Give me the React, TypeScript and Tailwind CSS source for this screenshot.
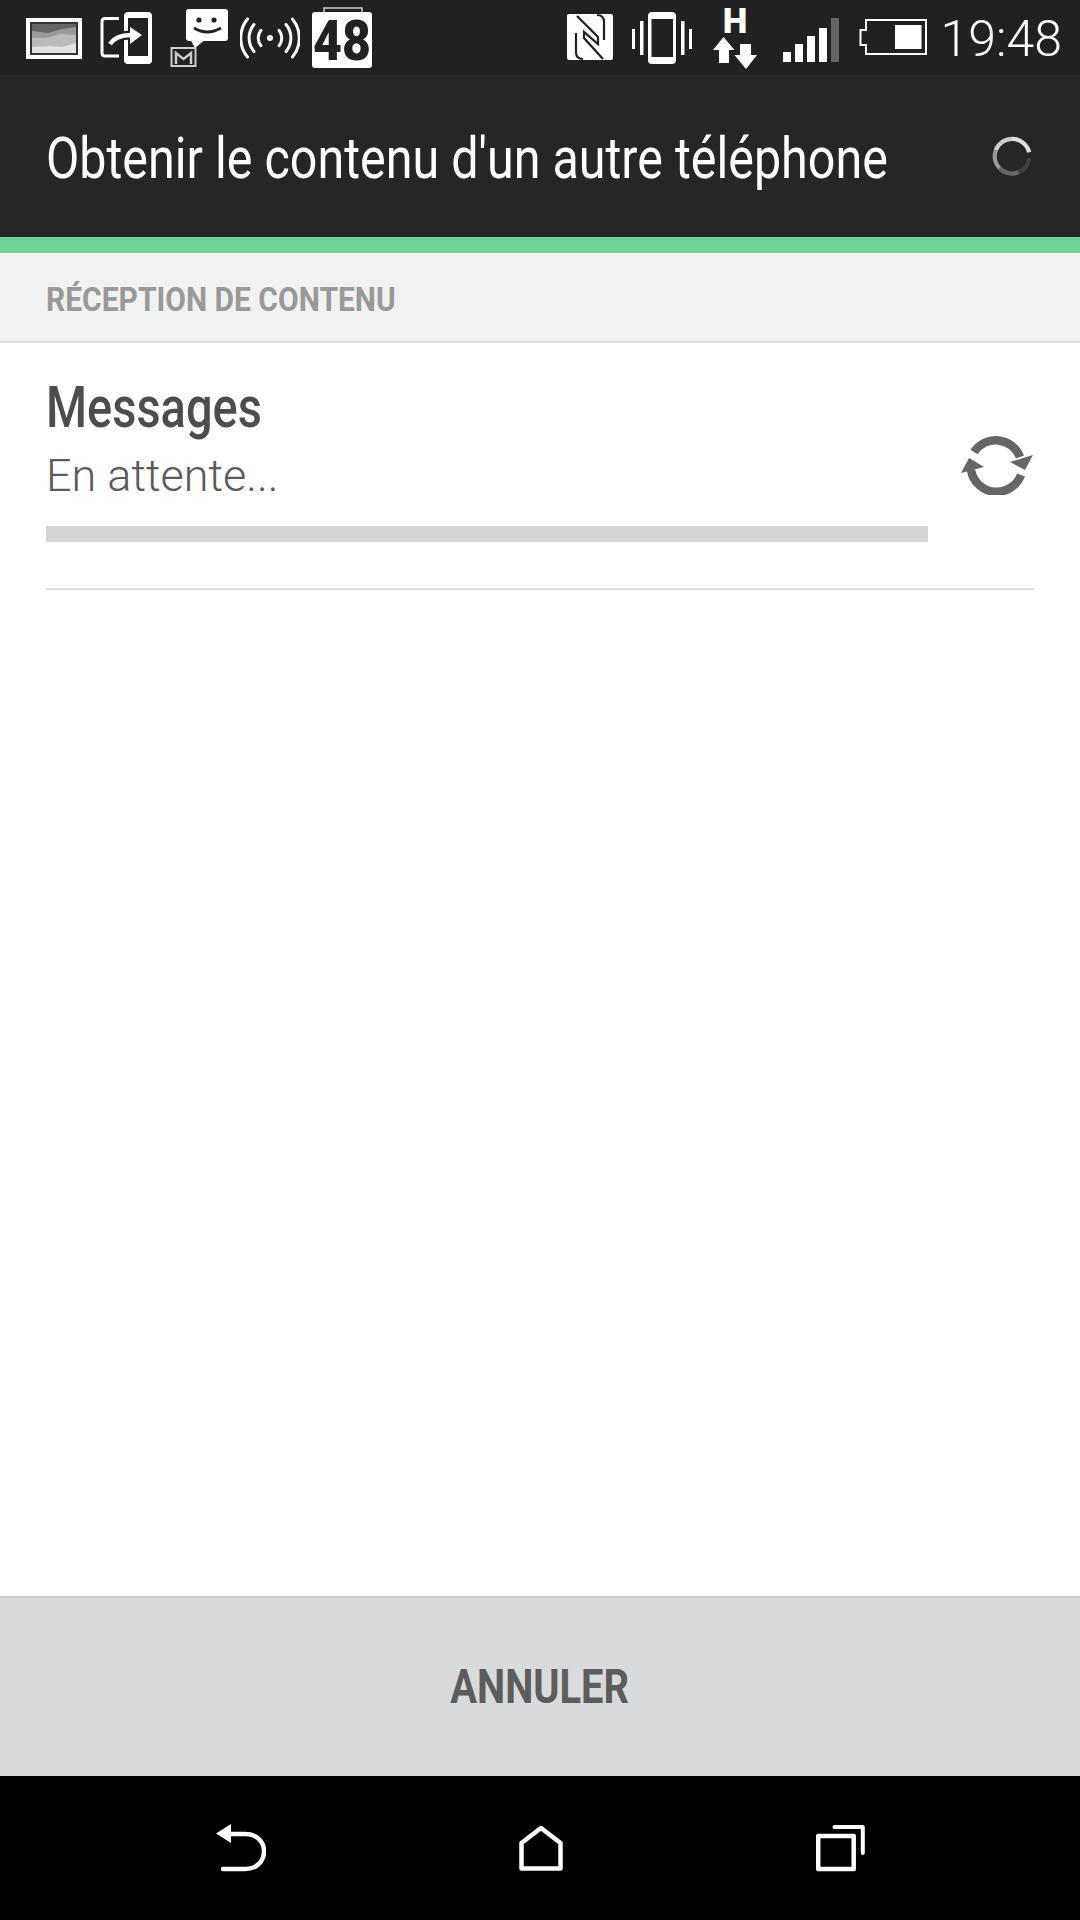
export default function App() {
  const dark = "#212121";
  return (
    <div className="w-[1080px] h-[1920px] flex flex-col bg-white overflow-hidden font-['Roboto',sans-serif]">
      {/* Status bar */}
      <div className="h-[75px] shrink-0 bg-[#212121] flex justify-between">
        <div className="flex pl-[26px]">
          <svg width="56" height="75" viewBox="26 0 56 75">
            <rect x="26" y="18" width="56" height="41" fill="#fff" />
            <rect x="30" y="22" width="48" height="33" fill="#333" />
            <rect x="32" y="24" width="44" height="29" fill="#666" />
            <polygon points="32,31 48,33 62,29 76,27 76,53 32,53" fill="#999" />
            <polygon points="32,38 46,38 60,34 76,35 76,53 32,53" fill="#bbb" />
            <polygon points="32,47 50,46 62,47 76,43 76,53 32,53" fill="#e2e2e2" />
          </svg>
          <svg className="ml-[18px]" width="52" height="75" viewBox="100 0 52 75">
            <path d="M119 18.5 H105 Q102 18.5 102 21.5 V53 Q102 56 105 56 H119" fill="none" stroke="#fff" strokeWidth="3" />
            <rect x="124" y="12" width="28" height="52" rx="4" fill="#fff" />
            <rect x="128" y="18" width="20" height="38" fill={dark} />
            <path d="M110 44 Q116 35 131 35" fill="none" stroke={dark} strokeWidth="9" />
            <path d="M110 44 Q116 35 131 35" fill="none" stroke="#fff" strokeWidth="4.5" />
            <polygon points="130,27 142,35 130,44" fill="#fff" />
          </svg>
          <svg className="ml-[18px]" width="59" height="75" viewBox="170 0 59 75">
            <rect x="186" y="9" width="42" height="32" rx="3" fill="#fff" />
            <polygon points="190,39 206,39 195,48" fill="#fff" />
            <circle cx="199" cy="20" r="2.6" fill={dark} />
            <circle cx="214" cy="20" r="2.6" fill={dark} />
            <path d="M194 28 Q207 36 221 28" fill="none" stroke={dark} strokeWidth="2.8" />
            <rect x="171.5" y="48" width="24" height="18" fill={dark} stroke="#ccc" strokeWidth="2" />
            <path d="M176 64 V53 L183.5 59 L191 53 V64" fill="none" stroke="#ccc" strokeWidth="2.5" />
          </svg>
          <svg className="ml-[11px]" width="60" height="75" viewBox="240 0 60 75">
            <circle cx="270" cy="38" r="3" fill="#fff" />
            <g fill="none" stroke="#fff" strokeWidth="3" strokeLinecap="round">
              <path d="M247.5 19 A30 30 0 0 0 247.5 57" />
              <path d="M254 24.5 A21 21 0 0 0 254 51.5" />
              <path d="M261 30.3 A12 12 0 0 0 261 45.7" />
              <path d="M292.5 19 A30 30 0 0 1 292.5 57" />
              <path d="M286 24.5 A21 21 0 0 1 286 51.5" />
              <path d="M279 30.3 A12 12 0 0 1 279 45.7" />
            </g>
          </svg>
          <svg className="ml-[12px]" width="60" height="75" viewBox="312 0 60 75">
            <rect x="324" y="8" width="38" height="6" fill="none" stroke="#ccc" strokeWidth="1.5" />
            <rect x="312" y="12" width="60" height="56" rx="3" fill="#fff" />
            <text x="342" y="53.6" transform="scale(1 1.12)" textAnchor="middle" fontFamily="Roboto" fontWeight="900" fontSize="50" fill={dark}>48</text>
          </svg>
        </div>
        <div className="flex pr-[18px]">
          <svg width="46" height="75" viewBox="566 0 46 75">
            <rect x="566" y="14" width="46" height="46" rx="2" fill="#fff" />
            <g fill="none" stroke={dark} strokeWidth="2.2">
              <path d="M575 33 V52 Q575 59 582 59" />
              <path d="M603 40 V22 Q603 15 596 15" />
              <path d="M576 16 L597 37 V44 L583 32 V38 L602 59" />
            </g>
          </svg>
          <svg className="ml-[18px]" width="61" height="75" viewBox="630 0 61 75">
            <rect x="647" y="12" width="28" height="52" rx="4" fill="#fff" />
            <rect x="650.5" y="19" width="21.5" height="38" fill={dark} />
            <rect x="631" y="29" width="3" height="20" fill="#fff" />
            <rect x="639" y="21" width="3.5" height="34" fill="#fff" />
            <rect x="680" y="21" width="3.5" height="34" fill="#fff" />
            <rect x="688" y="29" width="3" height="20" fill="#fff" />
          </svg>
          <svg className="ml-[21px]" width="44" height="75" viewBox="712 0 44 75">
            <text x="734" y="33" textAnchor="middle" fontFamily="Roboto" fontWeight="900" fontSize="35" fill="#fff">H</text>
            <polygon points="722.5,37 712,50 718,50 718,63 728,63 728,50 733.5,50" fill="#fff" />
            <polygon points="739,44 750,44 750,55 756,55 745,69 733.5,55 739,55" fill="#fff" />
          </svg>
          <svg className="ml-[26px]" width="56" height="75" viewBox="782 0 56 75">
            <rect x="782" y="52" width="8" height="10" fill="#fff" />
            <rect x="794" y="44" width="8" height="18" fill="#fff" />
            <rect x="806" y="36" width="8" height="26" fill="#fff" />
            <rect x="818" y="28" width="8" height="34" fill="#fff" />
            <rect x="830" y="18" width="8" height="44" fill="#666" />
          </svg>
          <svg className="ml-[20px]" width="68" height="75" viewBox="858 0 68 75">
            <path d="M865 20 H925 V54 H865 V45 H859.5 V30 H865 Z" fill="none" stroke="#fff" strokeWidth="2" />
            <rect x="894" y="25" width="26.5" height="24" fill="#fff" />
          </svg>
          <div className="ml-[14px] h-[75px] leading-[78px] text-[50px] font-light text-white">19:48</div>
        </div>
      </div>

      {/* Header */}
      <div className="h-[162px] shrink-0 bg-[#262626] flex items-center justify-between pl-[46px] pr-[48px]">
        <span className="whitespace-nowrap text-[58px] leading-none text-white origin-left scale-x-[0.835] w-[842px] pt-[4px]">
          Obtenir le contenu d'un autre téléphone
        </span>
        <svg width="40" height="42" viewBox="991 135 42 42">
          <g fill="none" strokeWidth="4.5">
            <path d="M1012 138 A18.5 18.5 0 0 1 1030 152" stroke="#ddd" />
            <path d="M1012 138 A18.5 18.5 0 0 0 995 150" stroke="#ccc" />
            <path d="M995 150 A18.5 18.5 0 0 0 999 169" stroke="#999" />
            <path d="M999 169 A18.5 18.5 0 0 0 1019 173" stroke="#666" />
            <path d="M1019 173 A18.5 18.5 0 0 0 1030 158" stroke="#3e3e3e" />
          </g>
        </svg>
      </div>
      <div className="h-4 shrink-0 bg-[#6fd297]" />

      {/* Section title */}
      <div className="h-[90px] shrink-0 bg-[#f0f2f1] border-b-2 border-[#dedede] flex items-center pl-[46px]">
        <span className="whitespace-nowrap text-[34px] leading-none font-bold text-[#999999] origin-left scale-x-[0.882] pt-[4px]">
          RÉCEPTION DE CONTENU
        </span>
      </div>

      {/* Content */}
      <div className="flex-1 px-[46px]">
        <div className="h-[247px] border-b-2 border-[#e0e0e0] flex">
          <div className="w-[882px] flex flex-col">
            <span className="mt-[30px] whitespace-nowrap text-[58px] leading-[68px] font-medium text-[#4d4d4d] origin-left scale-x-[0.81]">
              Messages
            </span>
            <span className="mt-[6px] text-[45px] leading-[58px] font-light text-[#5a5a5a]">En attente...</span>
            <div className="mt-[21px] h-4 bg-[#d4d4d4]" />
          </div>
          <svg className="ml-[32px] mt-[90px]" width="74" height="62" viewBox="959 434 74 62">
            <g fill="none" stroke="#666" strokeWidth="8.5">
              <path d="M973 453 A26 26 0 0 1 1019 458" />
              <path d="M1020 476 A26 26 0 0 1 970 471" />
            </g>
            <polygon points="1032,456 1009,463 1024,471" fill="#666" />
            <polygon points="960,474 968,459 983,468" fill="#666" />
          </svg>
        </div>
      </div>

      {/* Cancel */}
      <div className="h-[180px] shrink-0 bg-[#d9dadc] border-t-2 border-[#c8c9ca] flex items-center justify-center">
        <span className="whitespace-nowrap text-[48px] leading-none font-bold text-[#5c5c5c] scale-x-[0.83]">ANNULER</span>
      </div>

      {/* Navigation */}
      <div className="h-[144px] shrink-0 bg-black flex items-center justify-between pl-[216px] pr-[215px]">
        <svg width="50" height="144" viewBox="216 1776 50 144">
          <polygon points="216,1833.5 231,1824 231,1843" fill="#fff" />
          <path d="M230 1834 H245 C258 1834 264 1843 264 1851 C264 1860 258 1869 245 1869 H223" fill="none" stroke="#fff" strokeWidth="4.5" strokeLinecap="round" />
        </svg>
        <svg width="44" height="144" viewBox="518 1776 44 144">
          <path d="M540 1828 L520.5 1843 V1868.5 H559.5 V1843 Z" fill="none" stroke="#fff" strokeWidth="4.5" strokeLinejoin="round" />
        </svg>
        <svg width="49" height="144" viewBox="816 1776 49 144">
          <rect x="818.2" y="1836" width="35.5" height="33" fill="none" stroke="#fff" strokeWidth="4.5" strokeLinejoin="round" />
          <path d="M834.5 1827 H862.8 V1853" fill="none" stroke="#fff" strokeWidth="4" strokeLinecap="round" strokeLinejoin="round" />
        </svg>
      </div>
    </div>
  );
}
